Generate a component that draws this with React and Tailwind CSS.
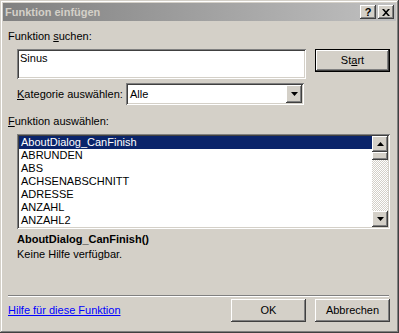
const raised =
  'shadow-[inset_-1px_-1px_#404040,inset_1px_1px_#ffffff,inset_-2px_-2px_#808080,inset_2px_2px_#d4d0c8]';
const sunken =
  'shadow-[inset_1px_1px_#808080,inset_-1px_-1px_#ffffff,inset_2px_2px_#404040,inset_-2px_-2px_#d4d0c8]';

const functions = [
  'AboutDialog_CanFinish',
  'ABRUNDEN',
  'ABS',
  'ACHSENABSCHNITT',
  'ADRESSE',
  'ANZAHL',
  'ANZAHL2',
];

function Arrow({ down }) {
  return (
    <svg width="7" height="4" viewBox="0 0 7 4">
      {down ? <path d="M0 0h7L3.5 4z" fill="#000" /> : <path d="M0 4h7L3.5 0z" fill="#000" />}
    </svg>
  );
}

function Button({ children, isDefault, className = '' }) {
  return (
    <button
      className={`h-[23px] w-[75px] bg-[#d4d0c8] text-black flex items-center justify-center ${
        isDefault ? 'border border-black' : ''
      } ${raised} ${className}`}
    >
      {children}
    </button>
  );
}

export default function App() {
  return (
    <div className="w-[399px] h-[333px] bg-[#d4d0c8] p-[3px] flex flex-col text-[11px] leading-[13px] text-black font-['Liberation_Sans',Arial,sans-serif] shadow-[inset_-1px_-1px_#404040,inset_1px_1px_#d4d0c8,inset_-2px_-2px_#808080,inset_2px_2px_#ffffff]">
      {/* Titelleiste */}
      <div className="h-[18px] flex items-center pl-[2px] pr-[2px] bg-[linear-gradient(to_right,#808080,#c0c0c0)]">
        <span className="font-bold text-[#d4d0c8]">Funktion einfügen</span>
        <div className="ml-auto flex gap-[2px]">
          <div className={`w-[16px] h-[14px] bg-[#d4d0c8] flex items-center justify-center font-bold text-[11px] ${raised}`}>
            ?
          </div>
          <div className={`w-[16px] h-[14px] bg-[#d4d0c8] flex items-center justify-center ${raised}`}>
            <svg width="8" height="7" viewBox="0 0 8 7">
              <path d="M0 0h2l2 2.3L6 0h2L5 3.5 8 7H6L4 4.7 2 7H0l3-3.5z" fill="#000" />
            </svg>
          </div>
        </div>
      </div>

      <div className="pl-[5px] pt-[9px]">
        <div>
          Funktion <u>s</u>uchen:
        </div>

        <div className="mt-[6px] ml-[9px] flex gap-[9px] items-start">
          <div className={`w-[289px] h-[30px] bg-white pl-[3px] pt-[3px] ${sunken}`}>Sinus</div>
          <Button isDefault>
            St<u>a</u>rt
          </Button>
        </div>

        <div className="mt-[4px] ml-[9px] w-[287px] flex items-center justify-between">
          <span>
            <u>K</u>ategorie auswählen:
          </span>
          <div className={`w-[178px] h-[22px] bg-white flex items-center p-[2px] ${sunken}`}>
            <span className="pl-[2px]">Alle</span>
            <div className={`ml-auto w-[16px] h-[18px] bg-[#d4d0c8] flex items-center justify-center ${raised}`}>
              <Arrow down />
            </div>
          </div>
        </div>

        <div className="mt-[10px]">
          <u>F</u>unktion auswählen:
        </div>

        <div className={`mt-[6px] ml-[9px] w-[373px] h-[95px] bg-white p-[2px] flex ${sunken}`}>
          <div className="flex-1">
            {functions.map((f, i) => (
              <div
                key={f}
                className={`h-[13px] pl-[2px] ${i === 0 ? 'bg-[#0a246a] text-white' : ''}`}
              >
                {f}
              </div>
            ))}
          </div>
          <div className="w-[16px] flex flex-col bg-[repeating-conic-gradient(#d4d0c8_0_25%,#ffffff_0_50%)] bg-[length:2px_2px]">
            <div className={`h-[16px] bg-[#d4d0c8] flex items-center justify-center ${raised}`}>
              <Arrow />
            </div>
            <div className={`h-[8px] bg-[#d4d0c8] ${raised}`} />
            <div className={`mt-auto h-[16px] bg-[#d4d0c8] flex items-center justify-center ${raised}`}>
              <Arrow down />
            </div>
          </div>
        </div>

        <div className="mt-[4px] ml-[9px] font-bold">AboutDialog_CanFinish()</div>
        <div className="mt-[2px] ml-[9px]">Keine Hilfe verfügbar.</div>

        <div className="mt-[34px] w-[381px] h-[2px] border-t border-t-[#808080] border-b border-b-white" />

        <div className="mt-[2px] w-[382px] flex items-center">
          <span className="text-[#0000ff] underline">Hilfe für diese Funktion</span>
          <div className="ml-auto flex gap-[9px]">
            <Button>OK</Button>
            <Button>Abbrechen</Button>
          </div>
        </div>
      </div>
    </div>
  );
}
